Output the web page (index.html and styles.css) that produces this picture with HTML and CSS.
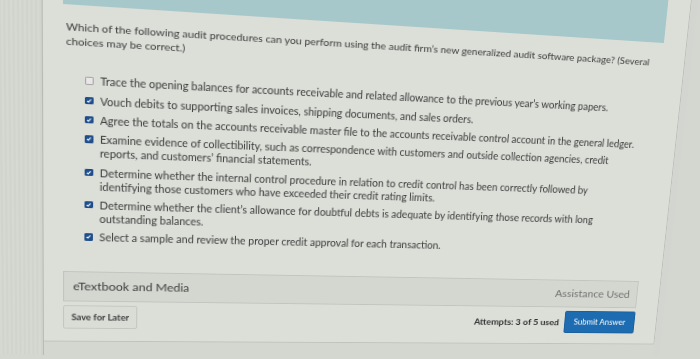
FILE: index.html
```html
<!DOCTYPE html>
<html lang="en">
<head>
<meta charset="utf-8">
<title>Question</title>
<link rel="stylesheet" href="styles.css">
</head>
<body>
<div class="stage">
  <div class="gutter"></div>
  <main class="panel">
    <div class="banner"></div>
    <p class="question">Which of the following audit procedures can you perform using the audit firm’s new generalized audit software package? (Several choices may be correct.)</p>
    <ul class="options">
      <li class="option"><span class="box"></span><span class="label">Trace the opening balances for accounts receivable and related allowance to the previous year’s working papers.</span></li>
      <li class="option"><span class="box checked"><svg viewBox="0 0 8 8"><path d="M1.5 4.1 L3.3 5.9 L6.6 2.1"/></svg></span><span class="label">Vouch debits to supporting sales invoices, shipping documents, and sales orders.</span></li>
      <li class="option"><span class="box checked"><svg viewBox="0 0 8 8"><path d="M1.5 4.1 L3.3 5.9 L6.6 2.1"/></svg></span><span class="label">Agree the totals on the accounts receivable master file to the accounts receivable control account in the general ledger.</span></li>
      <li class="option"><span class="box checked"><svg viewBox="0 0 8 8"><path d="M1.5 4.1 L3.3 5.9 L6.6 2.1"/></svg></span><span class="label">Examine evidence of collectibility, such as correspondence with customers and outside collection agencies, credit reports, and customers’ financial statements.</span></li>
      <li class="option"><span class="box checked"><svg viewBox="0 0 8 8"><path d="M1.5 4.1 L3.3 5.9 L6.6 2.1"/></svg></span><span class="label">Determine whether the internal control procedure in relation to credit control has been correctly followed by identifying those customers who have exceeded their credit rating limits.</span></li>
      <li class="option"><span class="box checked"><svg viewBox="0 0 8 8"><path d="M1.5 4.1 L3.3 5.9 L6.6 2.1"/></svg></span><span class="label">Determine whether the client’s allowance for doubtful debts is adequate by identifying those records with long outstanding balances.</span></li>
      <li class="option"><span class="box checked"><svg viewBox="0 0 8 8"><path d="M1.5 4.1 L3.3 5.9 L6.6 2.1"/></svg></span><span class="label">Select a sample and review the proper credit approval for each transaction.</span></li>
    </ul>
    <div class="resources">
      <span class="res-title">eTextbook and Media</span>
      <span class="assist">Assistance Used</span>
    </div>
    <div class="actions">
      <button class="save">Save for Later</button>
      <div class="submit-group">
        <span class="attempts">Attempts: 3 of 5 used</span>
        <button class="submit">Submit Answer</button>
      </div>
    </div>
  </main>
  <div class="side"></div>
</div>
</body>
</html>
```
FILE: styles.css
```css
html, body {
  margin: 0;
  height: 100%;
  overflow: hidden;
  background: #d4d6d0;
}
body {
  font-family: Lato, "Noto Sans", sans-serif;
  color: #3a3c3b;
}
/* whole sheet tilted like the photographed screen */
.stage {
  display: flex;
  width: 697px;
  height: 404px;
  margin-top: -44px;
  transform-origin: 63px 48px;
  transform: matrix3d(1.1198, 0.072787, 0, 0.00019967, 0, 1.048689, 0, 0.00018235, 0, 0, 1, 0, 0, 0, 0, 1);
}
.gutter {
  flex: none;
  width: 44px;
  background: repeating-linear-gradient(90deg, #d6d8d2 0 2px, #d1d3cd 2px 4px);
  border-right: 1px solid #b8bab4;
}
.panel {
  flex: none;
  box-sizing: border-box;
  width: 645px;
  height: 390px;
  padding: 0 25px 0 18px;
  background: #dcded8;
  border-right: 1px solid #bcbeb8;
  border-bottom: 1px solid #c0c2bc;
  display: flex;
  flex-direction: column;
}
.side {
  flex: 1;
  background: #d3d5d0;
}
.banner {
  flex: none;
  height: 48px;
  background: #a7c8cb;
}
.question {
  margin: 14px 0 0;
  padding-left: 2.7px;
  font-size: 10.4px;
  line-height: 14px;
}
.options {
  list-style: none;
  margin: 24.4px 0 0;
  padding: 0 17.5px 0 20px;
  display: flex;
  flex-direction: column;
  gap: 5.3px;
  font-size: 10.5px;
  line-height: 14px;
}
.option {
  display: flex;
  align-items: flex-start;
  gap: 6.5px;
}
.box {
  flex: none;
  box-sizing: border-box;
  width: 7.5px;
  height: 7.5px;
  margin-top: 3px;
  border: 1px solid #aaa4a7;
  border-radius: 1px;
  background: #e8e6e6;
}
.box.checked {
  border-color: #1c4a86;
  background: #1f4f8e;
  display: flex;
}
.box svg {
  width: 5.5px;
  height: 5.5px;
}
.box svg path {
  fill: none;
  stroke: #ffffff;
  stroke-width: 1.6;
}
.label {
  flex: 1;
}
.resources {
  flex: none;
  box-sizing: border-box;
  height: 32px;
  margin-top: 28.7px;
  padding: 0 8px 0 8.4px;
  border: 1px solid #c2c4be;
  background: #d4d7d0;
  display: flex;
  justify-content: space-between;
  align-items: center;
  font-size: 12px;
}
.res-title {
  color: #3d3f3e;
}
.assist {
  color: #727472;
}
.actions {
  flex: none;
  margin-top: 4px;
  display: flex;
  justify-content: space-between;
  align-items: center;
}
.save {
  box-sizing: border-box;
  width: 71px;
  height: 25px;
  padding: 0;
  border: 1px solid #c4c6c0;
  border-radius: 2px;
  background: #dadcd6;
  font: bold 9px Lato, sans-serif;
  color: #3a3c3b;
}
.submit-group {
  display: flex;
  align-items: center;
  gap: 6px;
}
.attempts {
  font-weight: bold;
  font-size: 10px;
  color: #2e302f;
}
.submit {
  box-sizing: border-box;
  width: 81px;
  height: 26px;
  padding: 0;
  border: 1px solid #1a5f9c;
  border-radius: 2px;
  background: #1d6bb0;
  color: #ffffff;
  font: 9px Lato, sans-serif;
}
```
